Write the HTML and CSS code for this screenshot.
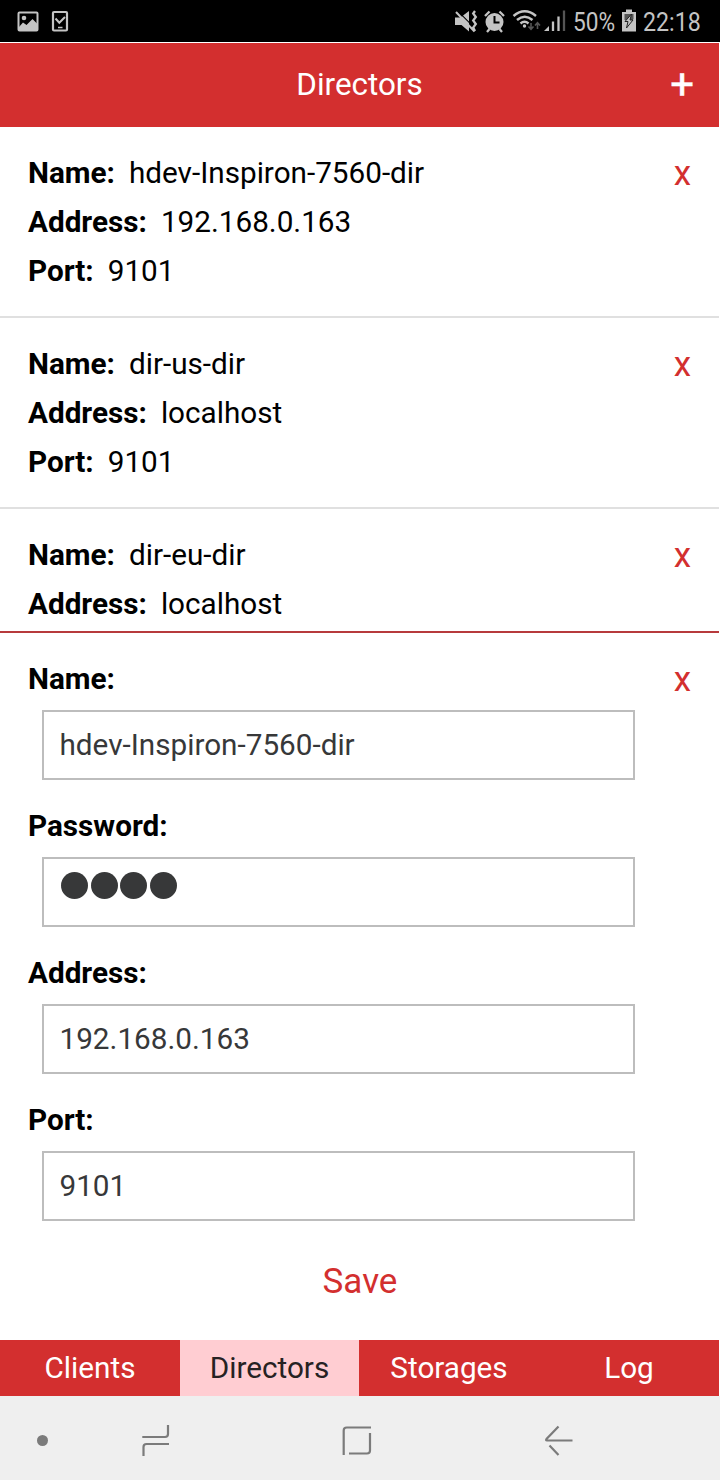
FILE: index.html
```html
<!DOCTYPE html>
<html lang="en">
<head>
<meta charset="utf-8">
<title>Directors</title>
<link rel="stylesheet" href="styles.css">
</head>
<body>
<div class="screen">
  <div class="statusbar">
    <svg class="status-left" width="70" height="42" viewBox="0 0 70 42" fill="none" stroke="#c4c4c4">
      <rect x="18.5" y="12.5" width="19" height="18" rx="1" stroke-width="2"/>
      <circle cx="24" cy="18" r="2.3" fill="#c4c4c4" stroke="none"/>
      <path d="M19 27l4-4.500 3.500 2.500 6-6 5 5v6.500H19z" fill="#c4c4c4" stroke="none"/>
      <rect x="53" y="12" width="14" height="18.500" rx="1" stroke-width="2.200"/>
      <path d="M55.500 18.500l3.800 4.200 5.700-5.700" stroke-width="2"/>
      <path d="M58 27.500h4.500" stroke-width="1.500"/>
    </svg>
    <svg class="status-icons" width="114" height="42" viewBox="452 0 114 42" fill="none" stroke="#c4c4c4">
      <path d="M455 17.500h5l2.500-1 6.500 6.500v8.500l-7.500-6.500H455zM463 15.500l6-4.500v10.500z" fill="#c4c4c4" stroke="none"/>
      <path d="M456 12l18.500 19.500" stroke-width="2"/>
      <path d="M475 11l-1.800 2.500 2.600 3.500-2.600 3.500 2.600 3.500-2.600 3.500 1.800 3.500" stroke-width="2.300"/>
      <circle cx="494.500" cy="22" r="9" fill="#c4c4c4" stroke="none"/>
      <path d="M485 16l4.500-4.500M499.500 11.500l4.500 4.500M489.500 29l-2.500 3M499.500 29l2.500 3" stroke-width="2.300"/>
      <path d="M494.500 16v6.500h5" stroke="#000" stroke-width="2"/>
      <path d="M513.500 16q11.200-9.500 22.500 0M517 20q7.700-6.500 15.500 0M520.500 23.500q4-3.500 8 0" stroke-width="2.500"/>
      <circle cx="524.500" cy="26" r="1.700" fill="#c4c4c4" stroke="none"/>
      <path d="M531 23v6m-2.500-2.500 2.500 2.800 2.500-2.800M537.500 29v-6m-2.500 2.500 2.500-2.800 2.500 2.800" stroke="#555" stroke-width="1.600"/>
      <path d="M544 31l5-5v5z" fill="#c4c4c4" stroke="none"/>
      <path d="M553 31V21.500M558.500 31V16.500" stroke-width="2.300"/>
      <path d="M564 31V10.500" stroke="#555" stroke-width="2.300"/>
    </svg>
    <span class="percent">50%</span>
    <svg class="battery" width="14" height="42" viewBox="0 0 14 42">
      <path d="M4 9.500h6V12h4v19.500H0V12h4z" fill="#c4c4c4"/>
      <path d="M2.500 14h9v5l-1 1h-8z" fill="#555"/>
      <path d="M9.500 14L3 21.500h3L4.500 28l6.500-8H8z" fill="#c4c4c4" stroke="#222" stroke-width="1"/>
    </svg>
    <span class="clock">22:18</span>
  </div>

  <header class="titlebar">
    <h1 class="title">Directors</h1>
    <button class="add" aria-label="Add">+</button>
  </header>

  <main class="list">
    <section class="item">
      <div>
        <p class="row"><b>Name:</b><span>hdev-Inspiron-7560-dir</span></p>
        <p class="row"><b>Address:</b><span>192.168.0.163</span></p>
        <p class="row"><b>Port:</b><span>9101</span></p>
      </div>
      <button class="close">x</button>
    </section>
    <section class="item">
      <div>
        <p class="row"><b>Name:</b><span>dir-us-dir</span></p>
        <p class="row"><b>Address:</b><span>localhost</span></p>
        <p class="row"><b>Port:</b><span>9101</span></p>
      </div>
      <button class="close">x</button>
    </section>
    <section class="item">
      <div>
        <p class="row"><b>Name:</b><span>dir-eu-dir</span></p>
        <p class="row"><b>Address:</b><span>localhost</span></p>
      </div>
      <button class="close">x</button>
    </section>
  </main>

  <section class="form">
    <div class="fields">
      <div class="field"><b class="row">Name:</b><div class="input">hdev-Inspiron-7560-dir</div></div>
      <div class="field"><b class="row">Password:</b><div class="input password"><i class="dot"></i><i class="dot"></i><i class="dot"></i><i class="dot"></i></div></div>
      <div class="field"><b class="row">Address:</b><div class="input">192.168.0.163</div></div>
      <div class="field"><b class="row">Port:</b><div class="input">9101</div></div>
    </div>
    <button class="close">x</button>
  </section>
  <div class="actions"><button class="save">Save</button></div>

  <nav class="tabs">
    <a class="tab">Clients</a>
    <a class="tab active">Directors</a>
    <a class="tab">Storages</a>
    <a class="tab">Log</a>
  </nav>

  <footer class="navbar">
    <svg width="720" height="84" viewBox="0 1396 720 84" fill="none" stroke="#7b7b7b" stroke-width="2.200">
      <circle cx="42.500" cy="1440.500" r="5.500" fill="#7b7b7b" stroke="none"/>
      <path d="M142.300 1437H165q3 0 3-3v-9M143.500 1456v-9q0-3 3-3H169"/>
      <path d="M343.700 1455V1430.500q0-3 3-3H371M370 1433v17.500q0 3-3 3H349"/>
      <path d="M572.500 1440.500H547q-1.500 0-.5-1.500l12-12.500M549.500 1445.500l9 9.500"/>
    </svg>
  </footer>
</div>
</body>
</html>
```
FILE: styles.css
```css
* { box-sizing: border-box; margin: 0; padding: 0; }

body {
  font-family: Roboto, sans-serif;
  font-size: 29.7px;
  color: #000;
  background: #fff;
}

button { border: 0; background: none; font: inherit; }

.screen {
  display: flex;
  flex-direction: column;
  width: 720px;
  height: 1480px;
  overflow: hidden;
}

.statusbar {
  display: flex;
  flex: none;
  height: 42px;
  margin-bottom: 1px;
  background: #000;
  color: #c4c4c4;
  font-size: 25.5px;
  line-height: 44px;
}
.status-icons { margin-left: 382px; }
.percent, .clock { flex: none; transform-origin: 0 0; white-space: nowrap; }
.percent { width: 41px; margin-left: 7px; transform: scaleX(.89); }
.battery { flex: none; margin-left: 8px; }
.clock { width: 60px; margin-left: 7px; transform: scaleX(.91); }

.titlebar {
  display: grid;
  grid-template-columns: 80px 1fr 80px;
  align-items: center;
  flex: none;
  width: 719px;
  height: 84px;
  background: #d32f2f;
  color: #fff;
}
.title {
  grid-column: 2;
  text-align: center;
  font-size: 31.4px;
  font-weight: 400;
  line-height: 84px;
}
.add {
  padding-right: 25px;
  text-align: right;
  color: #fff;
  font-size: 42px;
  font-weight: 400;
  line-height: 84px;
  -webkit-text-stroke: .4px #fff;
}

.list { flex: none; width: 719px; height: 504px; overflow: hidden; }
.item {
  display: flex;
  justify-content: space-between;
  align-items: flex-start;
  height: 191px;
  padding: 21px 28px;
  border-bottom: 2px solid #e0e0e0;
}
.row { display: flex; gap: 14px; line-height: 49px; height: 49px; }
.close { margin-top: 1px; color: #d32f2f; font-size: 35px; line-height: 49px; }

.form {
  display: flex;
  flex: none;
  justify-content: space-between;
  align-items: flex-start;
  width: 719px;
  height: 609px;
  padding: 21px 28px 0;
  border-top: 2px solid #b73a3c;
}
.fields { display: flex; flex-direction: column; gap: 14px; }
.field { width: 621px; }
.input {
  display: flex;
  align-items: center;
  width: 593px;
  height: 70px;
  margin: 7px 14px;
  padding: 0 16px 2px 15.5px;
  border: 2px solid #bdbdbd;
  color: #373839;
}
.password { align-items: flex-start; gap: 2.7px; padding: 13px 17px; }
.dot { width: 27px; height: 27px; border-radius: 50%; background: #373839; }

.actions {
  display: flex;
  flex: 1;
  justify-content: center;
  align-items: center;
  padding-bottom: 18px;
}
.save { color: #d32f2f; font-size: 35px; line-height: 49px; }

.tabs {
  display: grid;
  flex: none;
  grid-template-columns: 180px 179px 180px 180px;
  width: 719px;
  height: 56px;
  background: #d32f2f;
  color: #fff;
}
.tab { text-align: center; line-height: 56px; }
.tab.active { background: #ffcdd2; color: #262223; }

.navbar { flex: none; height: 84px; background: #efefef; }
.navbar svg { display: block; }
```
